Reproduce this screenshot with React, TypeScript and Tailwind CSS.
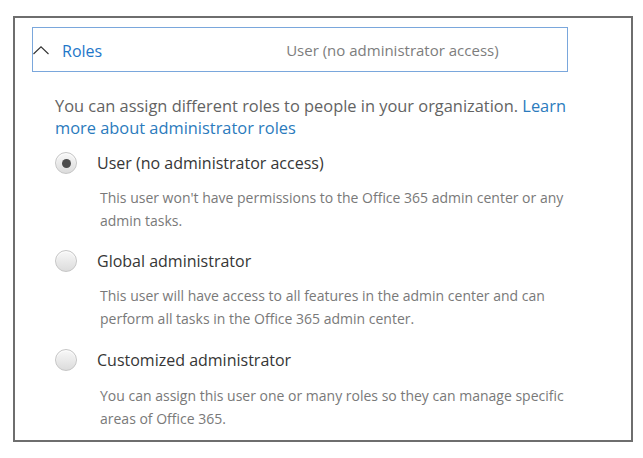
import { useState } from 'react';

const ROLES = [
  {
    id: 'user',
    label: 'User (no administrator access)',
    desc: "This user won't have permissions to the Office 365 admin center or any admin tasks.",
  },
  {
    id: 'global',
    label: 'Global administrator',
    desc: 'This user will have access to all features in the admin center and can perform all tasks in the Office 365 admin center.',
  },
  {
    id: 'custom',
    label: 'Customized administrator',
    desc: 'You can assign this user one or many roles so they can manage specific areas of Office 365.',
  },
];

function Radio({ checked }: { checked: boolean }) {
  return (
    <span className="w-[22px] h-[22px] shrink-0 rounded-full border border-[#c6c6c6] bg-gradient-to-b from-[#f8f8f8] to-[#dcdcdc] shadow-[inset_0_1px_1px_rgba(255,255,255,0.9)] flex items-center justify-center">
      {checked && <span className="w-[9px] h-[9px] rounded-full bg-[#4d4d4d]" />}
    </span>
  );
}

export default function App() {
  const [role, setRole] = useState('user');
  const current = ROLES.find((r) => r.id === role)!;

  return (
    <div className="w-[643px] h-[458px] bg-white pt-[16px] pl-[13px] font-['Open_Sans',sans-serif]">
      <div className="w-[620px] h-[426px] border-2 border-[#6e6e6e] pl-[17px]">
        {/* Header */}
        <div className="mt-[9px] w-[536px] h-[45px] border border-[#7aa7dc] flex items-center pt-[2px]">
          <svg width="16" height="9" viewBox="0 0 16 9" className="shrink-0">
            <polyline points="0.5,8 8,0.8 15.5,8" fill="none" stroke="#333" strokeWidth="1.1" />
          </svg>
          <span className="ml-[13px] text-[16px] text-[#1f77c9]">Roles</span>
          <span className="ml-[184px] text-[15px] text-[#7d7d7d]">{current.label}</span>
        </div>

        <div className="pl-[23px]">
          <p className="mt-[23px] w-[520px] text-[16.4px] leading-[22px] text-[#636363]">
            You can assign different roles to people in your organization.{' '}
            <a href="#" className="text-[#2b7bbd]">Learn more about administrator roles</a>
          </p>

          {ROLES.map((r, i) => (
            <div key={r.id} className={i === 0 ? 'mt-[12px]' : i === 1 ? 'mt-[17px]' : 'mt-[18px]'}>
              <label className="flex items-center gap-[20px] h-[24px] cursor-pointer" onClick={() => setRole(r.id)}>
                <Radio checked={role === r.id} />
                <span className="text-[16px] text-[#363636]">{r.label}</span>
              </label>
              <p className={`${i === 2 ? 'mt-[12px]' : 'mt-[11px]'} pl-[45px] w-[520px] text-[14px] leading-[23px] text-[#797979]`}>{r.desc}</p>
            </div>
          ))}
        </div>
      </div>
    </div>
  );
}
